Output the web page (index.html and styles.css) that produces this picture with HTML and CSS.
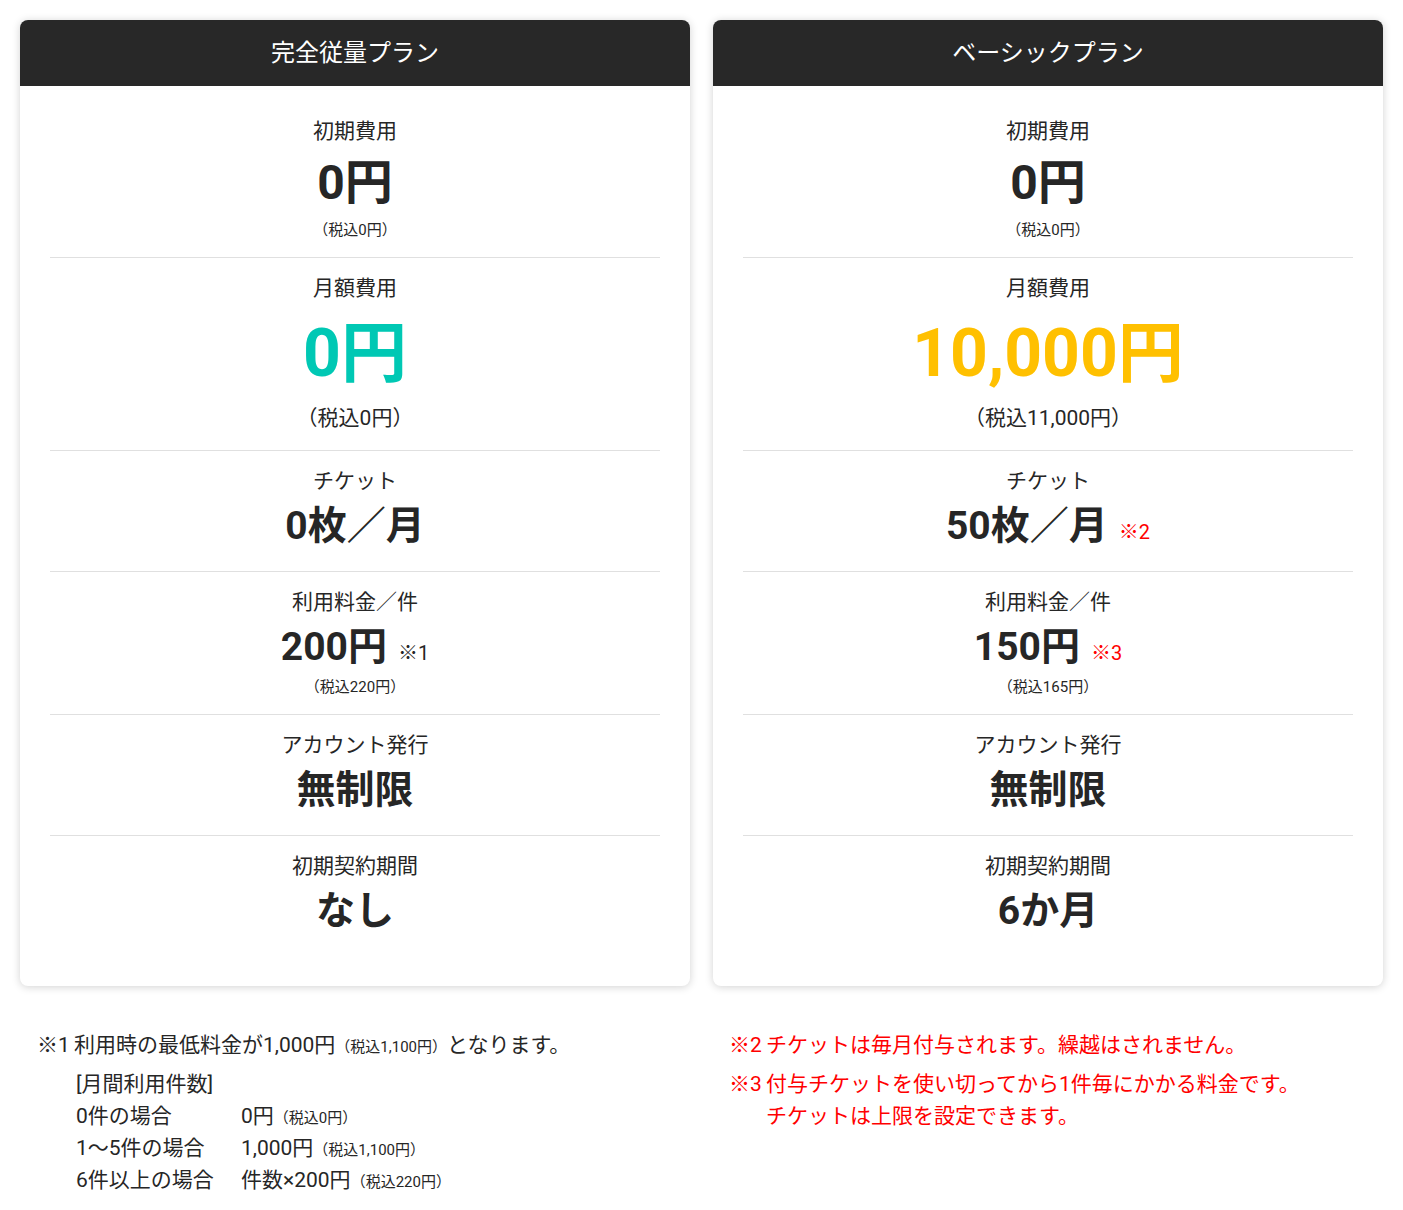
FILE: index.html
```html
<!DOCTYPE html>
<html lang="ja">
<head>
<meta charset="UTF-8">
<meta name="viewport" content="width=device-width, initial-scale=1.0">
<title>料金プラン</title>
<link rel="stylesheet" href="styles.css">
</head>
<body>
<div class="plans">
  <div class="plan">
    <div class="plan-head">完全従量プラン</div>
    <div class="plan-body">
      <div class="row">
        <div class="label">初期費用</div>
        <div class="value first">0円</div>
        <div class="tax first">（税込0円）</div>
      </div>
      <div class="row">
        <div class="label">月額費用</div>
        <div class="value big teal">0円</div>
        <div class="tax large">（税込0円）</div>
      </div>
      <div class="row">
        <div class="label">チケット</div>
        <div class="value">0枚／月</div>
      </div>
      <div class="row">
        <div class="label">利用料金／件</div>
        <div class="value">200円<span class="mark">※1</span></div>
        <div class="tax">（税込220円）</div>
      </div>
      <div class="row">
        <div class="label">アカウント発行</div>
        <div class="value">無制限</div>
      </div>
      <div class="row">
        <div class="label">初期契約期間</div>
        <div class="value">なし</div>
      </div>
    </div>
  </div>

  <div class="plan">
    <div class="plan-head">ベーシックプラン</div>
    <div class="plan-body">
      <div class="row">
        <div class="label">初期費用</div>
        <div class="value first">0円</div>
        <div class="tax first">（税込0円）</div>
      </div>
      <div class="row">
        <div class="label">月額費用</div>
        <div class="value big yellow">10,000円</div>
        <div class="tax large">（税込11,000円）</div>
      </div>
      <div class="row">
        <div class="label">チケット</div>
        <div class="value">50枚／月<span class="mark red">※2</span></div>
      </div>
      <div class="row">
        <div class="label">利用料金／件</div>
        <div class="value">150円<span class="mark red">※3</span></div>
        <div class="tax">（税込165円）</div>
      </div>
      <div class="row">
        <div class="label">アカウント発行</div>
        <div class="value">無制限</div>
      </div>
      <div class="row">
        <div class="label">初期契約期間</div>
        <div class="value">6か月</div>
      </div>
    </div>
  </div>

  <div class="notes">
    <div class="note">
      <span class="note-mark">※1</span>
      <div class="note-text">
        <p>利用時の最低料金が1,000円<small>（税込1,100円）</small>となります。</p>
      </div>
    </div>
    <div class="sub">
      <p class="sub-title">[月間利用件数]</p>
      <table class="sub-table">
        <tr><td>0件の場合</td><td>0円<small>（税込0円）</small></td></tr>
        <tr><td>1〜5件の場合</td><td>1,000円<small>（税込1,100円）</small></td></tr>
        <tr><td>6件以上の場合</td><td>件数×200円<small>（税込220円）</small></td></tr>
      </table>
    </div>
  </div>

  <div class="notes red">
    <div class="note">
      <span class="note-mark">※2</span>
      <div class="note-text">
        <p>チケットは毎月付与されます。繰越はされません。</p>
      </div>
    </div>
    <div class="note">
      <span class="note-mark">※3</span>
      <div class="note-text">
        <p>付与チケットを使い切ってから1件毎にかかる料金です。<br>チケットは上限を設定できます。</p>
      </div>
    </div>
  </div>
</div>
</body>
</html>
```

FILE: styles.css
```css
body {
  margin: 0;
  font-family: Roboto, "Noto Sans CJK JP", sans-serif;
  color: #262626;
  background-color: #fff;
}

.plans {
  display: grid;
  grid-template-columns: 1fr 1fr;
  column-gap: 23px;
  padding: 20px;
}

.plan {
  background-color: #fff;
  border-radius: 8px;
  box-shadow: 0 1px 8px rgba(0, 0, 0, 0.18);
  overflow: hidden;
}

.plan-head {
  background-color: #282828;
  color: #fff;
  text-align: center;
  font-size: 24px;
  line-height: 30px;
  padding: 18px 0;
}

.plan-body {
  padding: 15px 30px 30px;
}

.row {
  text-align: center;
  padding: 15px 0 17px;
  border-bottom: 1px solid #e0e0e0;
}

.row:last-child {
  border-bottom: none;
}

.label {
  font-size: 21px;
  line-height: 30px;
}

.value {
  font-size: 39px;
  font-weight: bold;
  line-height: 56px;
  margin-top: 2px;
}

.value.first {
  font-size: 48px;
  line-height: 60px;
  margin-top: 7px;
}

.value.big {
  font-size: 66px;
  line-height: 80px;
  margin-top: 11px;
}

.teal {
  color: #00c8b4;
}

.yellow {
  color: #ffc000;
}

.mark {
  font-size: 20px;
  font-weight: normal;
  line-height: 1;
  margin-left: 11px;
}

.mark.red {
  color: #ff0000;
}

.tax {
  font-size: 15px;
  line-height: 20px;
  margin-top: 2px;
}

.tax.first {
  margin-top: 7px;
}

.tax.large {
  font-size: 21px;
  line-height: 30px;
  margin-top: 9px;
}

.notes {
  margin-top: 43px;
  padding-left: 17px;
  font-size: 21px;
  line-height: 32px;
}

.notes.red {
  color: #ff0000;
  padding-left: 16px;
}

.note {
  display: flex;
  margin-bottom: 7px;
}

.note-mark {
  width: 37px;
  flex-shrink: 0;
}

.note-text p {
  margin: 0;
}

.notes small {
  font-size: 15px;
  line-height: 1;
}

.sub {
  padding-left: 39px;
  margin-top: 7px;
}

.sub-title {
  margin: 0;
}

.sub-table {
  border-collapse: collapse;
}

.sub-table td {
  padding: 0;
  height: 32px;
  line-height: 32px;
}

.sub-table td:first-child {
  width: 165px;
}
```
